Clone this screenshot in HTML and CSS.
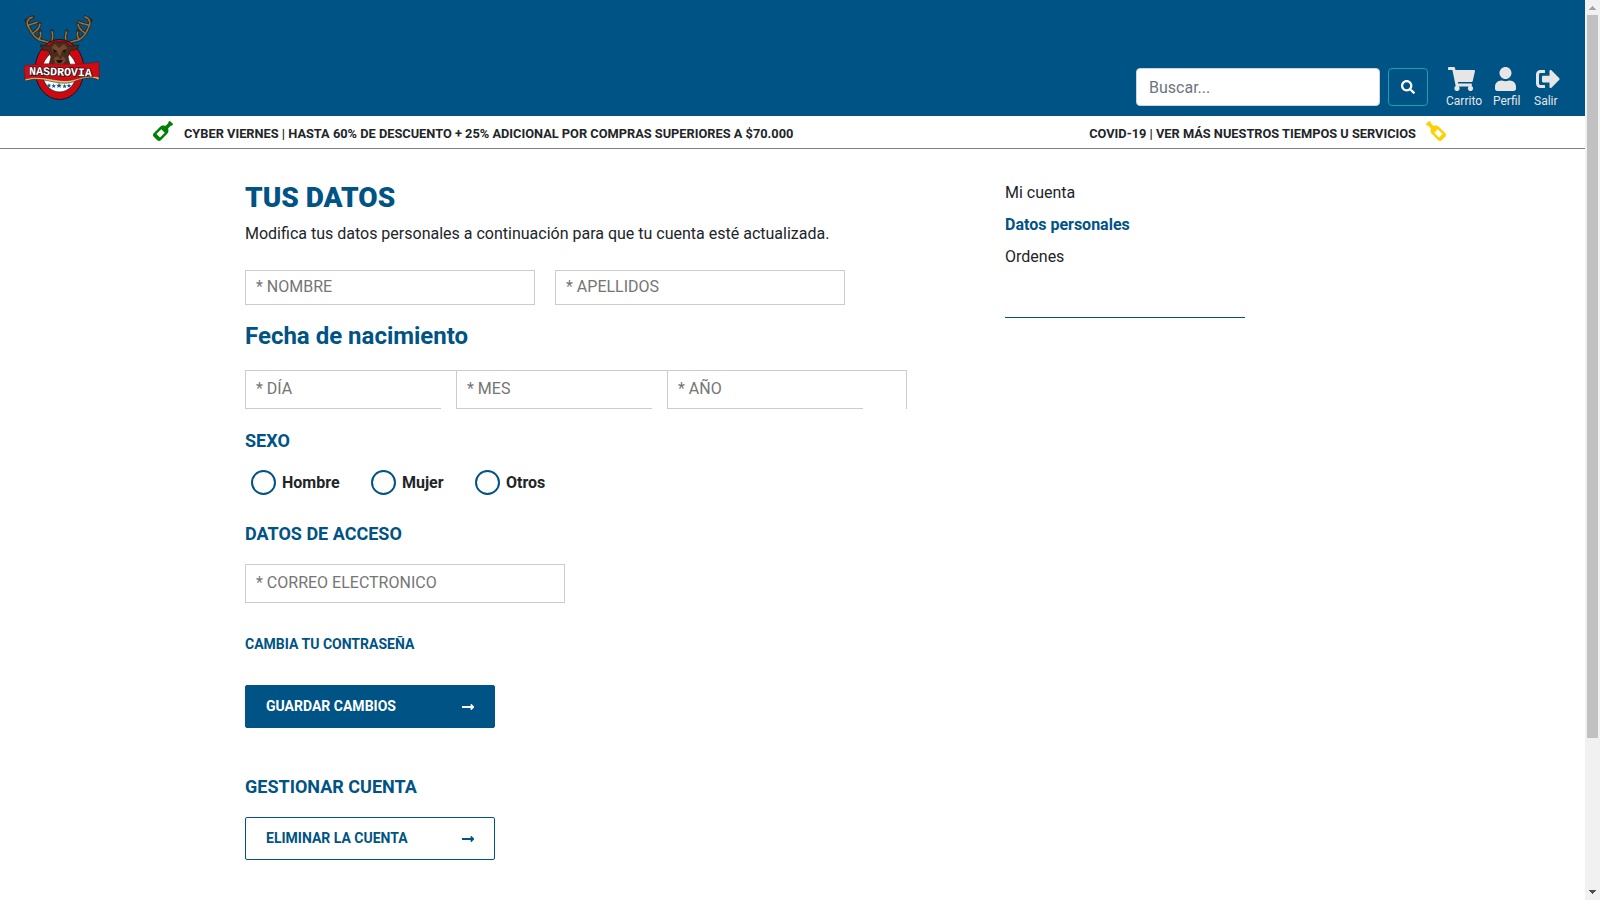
FILE: index.html
```html
<!DOCTYPE html>
<html lang="es">
<head>
<meta charset="utf-8">
<title>Nasdrovia - Tus datos</title>
<link rel="stylesheet" href="styles.css">
</head>
<body>
<div class="page">
  <header class="header">
    <a class="logo">
      <svg width="76" height="86" viewBox="24 15 76 86">
        <g fill="none" stroke="#33281a" stroke-linecap="round" stroke-linejoin="round">
          <path stroke-width="3.4" d="M52 45C49 41 43 42 38 39C33 36 31 31 28 26M28 26C26 22 28 18 33 17M29 25C31 24 34 24 37 22M33 33C36 31 39 29 40 24M39 39C41 36 41 34 40 31M51 43C53 39 53 35 52 31M28 24L26 20"/>
          <path stroke-width="3.4" d="M66 45C69 41 75 42 80 39C85 36 87 31 89 26M89 26C91 22 89 18 85 17M88 25C86 24 82 24 79 22M85 33C82 31 79 29 78 24M79 39C77 36 77 34 78 31M67 43C65 39 65 35 67 31M89 24L91 20"/>
          <g stroke="#8b7856" stroke-width="1.500" stroke-dasharray="3 1.200">
            <path d="M52 45C49 41 43 42 38 39C33 36 31 31 28 26M28 26C26 22 28 18 33 17M29 25C31 24 34 24 37 22M33 33C36 31 39 29 40 24M39 39C41 36 41 34 40 31M51 43C53 39 53 35 52 31"/>
            <path d="M66 45C69 41 75 42 80 39C85 36 87 31 89 26M89 26C91 22 89 18 85 17M88 25C86 24 82 24 79 22M85 33C82 31 79 29 78 24M79 39C77 36 77 34 78 31M67 43C65 39 65 35 67 31"/>
          </g>
        </g>
        <ellipse cx="59.500" cy="69.500" rx="24.500" ry="30" fill="#cc0810" stroke="#171319"/>
        <ellipse cx="59.500" cy="71.500" rx="17.500" ry="20.500" fill="#fff" stroke="#171319" stroke-width=".7"/>
        <path fill="#4b2c1b" stroke="#24150e" stroke-width=".7" d="M53 42L66 42L70 46L79 45L77 49L70 51L68 57L70 65H49L51 57L49 51L43 50L40 45L49 46Z"/>
        <path fill="#754630" d="M55 44L59 48L64 44L67 48L65 52L62 51L60 57L57 51L53 52L52 47ZM54 58L58 56L60 60L63 56L66 60L63 64H55Z"/>
        <path fill="#1b110d" d="M53 49L57 51L54 53ZM66 49L62 51L65 53ZM56 60H63L61 63H58Z"/>
        <path fill="#e3c078" stroke="#392115" stroke-width=".6" d="M25 81C43 75 57 87 73 82C83 78 91 76 99 80V74H25Z"/>
        <path fill="#d20a13" stroke="#850a12" stroke-width=".6" d="M24 66C48 61 72 67 99 62V77C87 75 81 78 72 80C57 83 43 74 25 79Z"/>
        <text class="logo-name" x="29.200" y="75.500" transform="rotate(1.500 60 72)">NASDROVIA</text>
        <g fill="#07558b">
          <path id="star" d="M49 83L49.600 84.700H51.300L50 85.800L50.500 87.500L49 86.500L47.500 87.500L48 85.800L46.700 84.700H48.400Z"/>
          <use href="#star" x="4.700" y=".5"/>
          <use href="#star" transform="translate(-2.200 -17) scale(1.250 1.200)"/>
          <use href="#star" x="15.600" y=".7"/>
          <use href="#star" x="20" y=".3"/>
        </g>
      </svg>
    </a>
    <div class="search">
      <input class="search-input" type="text" placeholder="Buscar...">
      <button class="search-button" aria-label="Buscar">
        <svg width="14" height="14" viewBox="0 0 512 512"><path fill="currentColor" d="M505 442.700L405.300 343c-4.500-4.500-10.600-7-17-7H372c27.600-35.300 44-79.700 44-128C416 93.100 322.900 0 208 0S0 93.100 0 208s93.100 208 208 208c48.300 0 92.700-16.400 128-44v16.300c0 6.400 2.500 12.500 7 17l99.700 99.700c9.400 9.400 24.600 9.400 33.900 0l28.300-28.300c9.400-9.400 9.400-24.600.1-34zM208 336c-70.700 0-128-57.200-128-128 0-70.700 57.200-128 128-128 70.700 0 128 57.200 128 128 0 70.700-57.200 128-128 128z"/></svg>
      </button>
    </div>
    <nav class="actions">
      <a class="action action-cart">
        <svg width="27" height="24" viewBox="0 0 576 512"><path fill="currentColor" d="M528.120 301.319l47.273-208C578.806 78.301 567.391 64 551.990 64H159.208l-9.166-44.810C147.758 8.021 137.930 0 126.529 0H24C10.745 0 0 10.745 0 24v16c0 13.255 10.745 24 24 24h69.883l70.248 343.435C147.325 417.100 136 435.222 136 456c0 30.928 25.072 56 56 56s56-25.072 56-56c0-15.674-6.447-29.835-16.824-40h209.647C430.447 426.165 424 440.326 424 456c0 30.928 25.072 56 56 56s56-25.072 56-56c0-22.172-12.888-41.332-31.579-50.405l5.517-24.276c3.413-15.018-8.002-29.319-23.403-29.319H218.117l-6.545-32h293.145c11.206 0 20.920-7.754 23.403-18.681z"/></svg>
        <span>Carrito</span>
      </a>
      <a class="action action-profile">
        <svg width="21" height="24" viewBox="0 0 448 512"><path fill="currentColor" d="M224 256c70.700 0 128-57.300 128-128S294.700 0 224 0 96 57.300 96 128s57.300 128 128 128zm89.600 32h-16.700c-22.200 10.200-46.900 16-72.900 16s-50.600-5.800-72.900-16h-16.700C60.200 288 0 348.200 0 422.400V464c0 26.500 21.500 48 48 48h352c26.500 0 48-21.500 48-48v-41.600c0-74.200-60.200-134.400-134.400-134.400z"/></svg>
        <span>Perfil</span>
      </a>
      <a class="action action-exit">
        <svg width="24" height="24" viewBox="0 0 512 512"><path fill="currentColor" d="M497 273L329 441c-15 15-41 4.500-41-17v-96H152c-13.300 0-24-10.700-24-24v-96c0-13.300 10.700-24 24-24h136V88c0-21.400 25.900-32 41-17l168 168c9.300 9.400 9.300 24.600 0 34zM192 436v-40c0-6.600-5.400-12-12-12H96c-17.700 0-32-14.300-32-32V160c0-17.700 14.300-32 32-32h84c6.600 0 12-5.400 12-12V76c0-6.600-5.400-12-12-12H96c-53 0-96 43-96 96v192c0 53 43 96 96 96h84c6.600 0 12-5.400 12-12z"/></svg>
        <span>Salir</span>
      </a>
    </nav>
  </header>

  <div class="promo">
    <div class="promo-item">
      <svg class="bottle-green" width="20" height="20" viewBox="0 0 512 512"><path id="bottle" fill="currentColor" d="M507.310 72.570L439.430 4.690c-6.250-6.250-16.380-6.250-22.630 0l-22.630 22.630c-6.250 6.250-6.250 16.380 0 22.630l-76.670 76.670c-46.580-19.700-102.400-10.730-140.370 27.230L18.750 312.230c-24.990 24.990-24.990 65.520 0 90.510l90.510 90.510c24.990 24.990 65.520 24.990 90.510 0l158.390-158.390c37.960-37.960 46.930-93.790 27.230-140.370l76.670-76.670c6.250 6.250 16.380 6.250 22.630 0l22.630-22.630c6.240-6.240 6.240-16.370-.01-22.620zM179.220 423.290l-90.510-90.510 122.040-122.040 90.510 90.510-122.040 122.040z"/></svg>
      <span>CYBER VIERNES | HASTA 60% DE DESCUENTO + 25% ADICIONAL POR COMPRAS SUPERIORES A $70.000</span>
    </div>
    <div class="promo-item promo-right">
      <span>COVID-19 | VER MÁS NUESTROS TIEMPOS U SERVICIOS</span>
      <svg class="bottle-yellow" width="20" height="20" viewBox="0 0 512 512"><use href="#bottle"/></svg>
    </div>
  </div>

  <main class="content">
    <form class="account">
      <h1 class="title">TUS DATOS</h1>
      <p class="intro">Modifica tus datos personales a continuación para que tu cuenta esté actualizada.</p>
      <div class="names">
        <input class="field field-name" placeholder="* NOMBRE">
        <input class="field field-name" placeholder="* APELLIDOS">
      </div>
      <h2 class="subtitle">Fecha de nacimiento</h2>
      <div class="birth">
        <div class="birth-part"><input class="birth-input" placeholder="* DÍA"></div>
        <div class="birth-part"><input class="birth-input" placeholder="* MES"></div>
        <div class="birth-part birth-year"><input class="birth-input" placeholder="* AÑO"></div>
      </div>
      <h3 class="section section-sex">SEXO</h3>
      <div class="radios">
        <label class="radio"><span class="circle"></span>Hombre</label>
        <label class="radio"><span class="circle"></span>Mujer</label>
        <label class="radio"><span class="circle"></span>Otros</label>
      </div>
      <h3 class="section section-access">DATOS DE ACCESO</h3>
      <input class="field field-mail" placeholder="* CORREO ELECTRONICO">
      <a class="password">CAMBIA TU CONTRASEÑA</a>
      <a class="button button-solid">GUARDAR CAMBIOS
        <svg width="12.250" height="14" viewBox="0 0 448 512"><path id="arrow" fill="currentColor" d="M313.941 216H12c-6.627 0-12 5.373-12 12v56c0 6.627 5.373 12 12 12h301.941v46.059c0 21.382 25.851 32.090 40.971 16.971l86.059-86.059c9.373-9.373 9.373-24.569 0-33.941l-86.059-86.059c-15.119-15.119-40.971-4.411-40.971 16.971V216z"/></svg>
      </a>
      <h3 class="section section-manage">GESTIONAR CUENTA</h3>
      <a class="button">ELIMINAR LA CUENTA
        <svg width="12.250" height="14" viewBox="0 0 448 512"><use href="#arrow"/></svg>
      </a>
    </form>
    <aside class="sidebar">
      <a>Mi cuenta</a>
      <a class="active">Datos personales</a>
      <a>Ordenes</a>
    </aside>
  </main>
</div>
<div class="scrollbar">
  <svg width="15" height="15" viewBox="0 0 15 15" shape-rendering="crispEdges"><path fill="#a3a3a3" d="M7 6h1v1h1v1h1v1h1v1H4V9h1V8h1V7h1z"/></svg>
  <div class="thumb"></div>
  <svg width="15" height="15" viewBox="0 0 15 15" shape-rendering="crispEdges"><path fill="#505050" d="M4 5h7v1h-1v1H9v1H8v1H7V8H6V7H5V6H4z"/></svg>
</div>
</body>
</html>
```

FILE: styles.css
```css
* { box-sizing: border-box; }

body {
  margin: 0;
  height: 900px;
  overflow: hidden;
  display: flex;
  background: #fff;
  color: #212529;
  font: 16px/24px Roboto, sans-serif;
}

.page { width: 1585px; }

svg { display: block; flex: none; }

h1, h2, h3, p { margin: 0; }

input {
  display: block;
  font: 16px/24px Roboto, sans-serif;
  outline: 0;
}

input::placeholder { color: #757575; opacity: 1; }

/* Header */
.header {
  height: 116px;
  padding: 0 25px 0 24px;
  display: flex;
  background: #005385;
}

.logo { margin: 15px auto 0 0; }
.logo svg { overflow: visible; }

.logo-name {
  font: bold 11.600px "Liberation Mono", monospace;
  fill: #fff;
  stroke: #32141c;
  stroke-width: 1.6px;
  paint-order: stroke;
}

.search { display: flex; gap: 8px; margin-top: 68px; }

.search-input {
  width: 244px;
  height: 38px;
  padding: 6px 12px;
  border: 1px solid #ced4da;
  border-radius: 4px;
}

.search-input::placeholder { color: #6c757d; }

.search-button {
  width: 40px;
  height: 38px;
  padding: 0;
  display: flex;
  align-items: center;
  justify-content: center;
  border: 1px solid #17a2b8;
  border-radius: 4px;
  background: transparent;
  color: #fff;
}

.actions { display: flex; margin: 67px 0 0 18px; color: #e6e6e6; }

.action { font-size: 12px; line-height: 20px; }
.action svg { margin-left: 2px; }
.action-cart { width: 47px; }
.action-profile { width: 41px; }
.action-exit { width: 26px; }

/* Promotional strip */
.promo {
  height: 33px;
  padding: 0 138px 0 153px;
  display: flex;
  justify-content: space-between;
  border-bottom: 1px solid #808080;
  font-size: 12.800px;
  font-weight: 700;
  line-height: 19px;
}

.promo-item { display: flex; gap: 11px; padding-top: 8px; }
.promo-right { gap: 10px; padding-right: 1px; }
.promo svg { margin-top: -3.500px; }
.bottle-green { color: #008000; }
.bottle-yellow { color: #ffd000; transform: scaleX(-1); }

/* Account form */
.content { display: flex; padding-left: 245px; }

.account { width: 760px; padding-top: 32px; }

.title { font-size: 28px; font-weight: 900; line-height: 34px; color: #005385; }

.intro { margin-top: 7px; }

.names { display: flex; gap: 20px; margin-top: 24px; }

.field { padding: 0 10px 3px; border: 1px solid #ccc; background: #fff; }
.field-name { width: 290px; height: 35px; }
.field-mail { width: 320px; height: 39px; margin-top: 19px; }

.subtitle { margin-top: 17px; font-size: 24px; line-height: 29px; color: #005385; }

.birth { display: flex; width: 662px; margin-top: 19px; border-right: 1px solid #ccc; }

.birth-part { width: 211px; border-top: 1px solid #ccc; }
.birth-year { width: 239px; }

.birth-input {
  width: 196px;
  height: 38px;
  padding: 0 10px 3px;
  border: solid #ccc;
  border-width: 0 0 1px 1px;
  background: #fff;
}

.section { font-size: 18px; line-height: 22px; color: #005385; }
.section-sex { margin-top: 21px; }
.section-access { margin-top: 28px; }
.section-manage { margin-top: 48px; }

.radios { display: flex; gap: 31.400px; margin: 18px 0 0 6px; }

.radio { display: flex; align-items: center; gap: 6px; height: 25px; font-weight: 700; }

.circle { width: 25px; height: 25px; border: 2px solid #005385; border-radius: 50%; }

.password {
  display: block;
  margin-top: 31px;
  font-size: 14px;
  font-weight: 700;
  line-height: 20px;
  color: #005385;
}

.button {
  display: flex;
  align-items: center;
  justify-content: space-between;
  width: 250px;
  height: 43px;
  margin-top: 19px;
  padding: 0 20px 1px;
  border: 1px solid #005385;
  border-radius: 2px;
  font-size: 14px;
  font-weight: 700;
  line-height: 20px;
  color: #005385;
}

.button svg { margin-top: 2px; }

.button-solid { margin-top: 31px; background: #005385; color: #fff; }

/* Account menu */
.sidebar {
  display: flex;
  flex-direction: column;
  gap: 8px;
  width: 240px;
  height: 137px;
  margin-top: 32px;
  border-bottom: 1px solid #005385;
}

.active { font-weight: 700; color: #005385; }

/* Window scrollbar */
.scrollbar {
  display: flex;
  flex-direction: column;
  width: 15px;
  height: 900px;
  background: #f1f1f1;
}

.thumb { width: 11px; height: 723px; margin: 0 2px auto; background: #c1c1c1; }
```
